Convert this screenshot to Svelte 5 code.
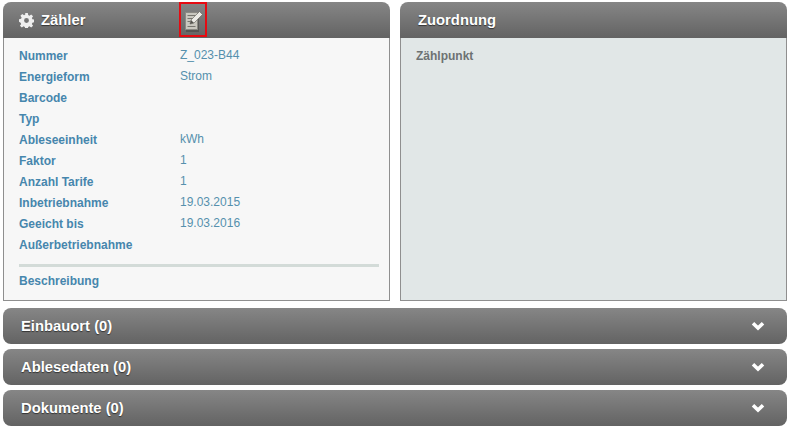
<script>
	const fields = [
		['Nummer', 'Z_023-B44'],
		['Energieform', 'Strom'],
		['Barcode', ''],
		['Typ', ''],
		['Ableseeinheit', 'kWh'],
		['Faktor', '1'],
		['Anzahl Tarife', '1'],
		['Inbetriebnahme', '19.03.2015'],
		['Geeicht bis', '19.03.2016'],
		['Außerbetriebnahme', '']
	];
	const sections = ['Einbauort (0)', 'Ablesedaten (0)', 'Dokumente (0)'];
</script>

<div class="page">
	<div class="top">
		<section class="panel">
			<header class="head">
				<svg class="gear" viewBox="0 0 16 16" width="15" height="15">
					<path
						fill="#eee"
						fill-rule="evenodd"
						d="M6.600 0h2.800l.4 2.200 1.300.6 1.900-1.300 2 2-1.300 1.900.6 1.300 2.200.4v2.800l-2.200.4-.6 1.300 1.300 1.900-2 2-1.900-1.300-1.300.6-.4 2.200H6.600l-.4-2.200-1.300-.6-1.900 1.300-2-2 1.300-1.900-.6-1.300L0 9.400V6.600l2.200-.4.6-1.300L1.500 3l2-2 1.900 1.300 1.300-.6zM8 5.400a2.600 2.600 0 1 0 0 5.200 2.600 2.600 0 0 0 0-5.200z"
					/>
				</svg>
				<h2 class="title">Zähler</h2>
				<span class="edit">
					<svg viewBox="0 0 20 24" width="20" height="24">
						<rect x="3" y="6" width="13" height="18" fill="#3f3f3c" opacity=".5" />
						<rect x="2.500" y="4.500" width="12" height="17" fill="#c9c7bf" stroke="#8b8a84" />
						<path d="M4.500 7.500h8M4.500 10.500h6M4.500 13.500h3M4.500 18.500h8" stroke="#77766f" />
						<path d="M7 16l1-4 8.500-8.500 3 3L11 15z" fill="#ecebe6" stroke="#5f5e58" stroke-width=".6" />
						<path d="M7 16l1-4 3 3z" fill="#55544f" />
					</svg>
				</span>
			</header>
			<div class="body left-body">
				<dl class="fields">
					{#each fields as [label, value]}
						<div class="row">
							<dt>{label}</dt>
							<dd>{value}</dd>
						</div>
					{/each}
				</dl>
				<hr />
				<div class="desc">Beschreibung</div>
			</div>
		</section>

		<section class="panel">
			<header class="head">
				<h2 class="title plain">Zuordnung</h2>
			</header>
			<div class="body right-body">
				<div class="assign">Zählpunkt</div>
			</div>
		</section>
	</div>

	{#each sections as name}
		<div class="bar">
			<h2 class="title plain">{name}</h2>
			<svg class="chev" viewBox="0 0 14 10" width="14" height="10">
				<path d="M2 2.300l5 4.700 5-4.700" fill="none" stroke="#fff" stroke-width="3.600" />
			</svg>
		</div>
	{/each}
</div>

<style>
	:global(body) {
		background: #fff;
		font-family: 'Liberation Sans', Arial, sans-serif;
	}

	.page {
		width: 784px;
		padding: 2px 3px;
		display: flex;
		flex-direction: column;
		gap: 5px;
	}

	.top {
		display: flex;
		gap: 10px;
		margin-bottom: 2px;
	}

	.panel {
		width: 387px;
		height: 299px;
		display: flex;
		flex-direction: column;
	}

	.head,
	.bar {
		display: flex;
		align-items: center;
		background: linear-gradient(#868686, #636363);
		border-radius: 8px 8px 0 0;
		flex: none;
		height: 36px;
	}

	.head {
		padding-left: 15px;
	}

	.gear {
		margin: 0 7px 0 1px;
	}

	.title {
		margin: 0;
		color: #fff;
		font-size: 14.800px;
		font-weight: bold;
		text-shadow: 0 1px 1px #333;
	}

	.plain {
		margin-left: 3px;
	}

	.edit {
		position: absolute;
		left: 179px;
		top: 2px;
		width: 28px;
		height: 35px;
		box-sizing: border-box;
		border: 2px solid #e60b12;
		display: flex;
		align-items: center;
		justify-content: center;
	}

	.body {
		flex: 1;
		border: 1px solid #8f8f8f;
		border-top: 0;
		font-size: 12px;
	}

	.left-body {
		background: #f7f7f7;
		padding: 8px 10px 0 15px;
	}

	.right-body {
		background: #e1e7e7;
		padding: 11px 15px;
	}

	.assign {
		font-weight: bold;
		color: #6d7273;
	}

	.fields {
		margin: 0;
	}

	.row {
		display: flex;
		height: 21px;
		line-height: 21px;
	}

	dt {
		width: 161px;
		font-weight: bold;
		color: #4686ad;
	}

	dd {
		margin: 0;
		color: #5590ad;
		position: relative;
		top: -1px;
	}

	hr {
		margin: 8px 0 0;
		height: 3px;
		border: 0;
		background: #d3dbd8;
	}

	.desc {
		margin-top: 7px;
		font-weight: bold;
		color: #4686ad;
	}

	.bar {
		border-radius: 8px;
		justify-content: space-between;
		padding: 0 22px 0 15px;
	}
</style>
